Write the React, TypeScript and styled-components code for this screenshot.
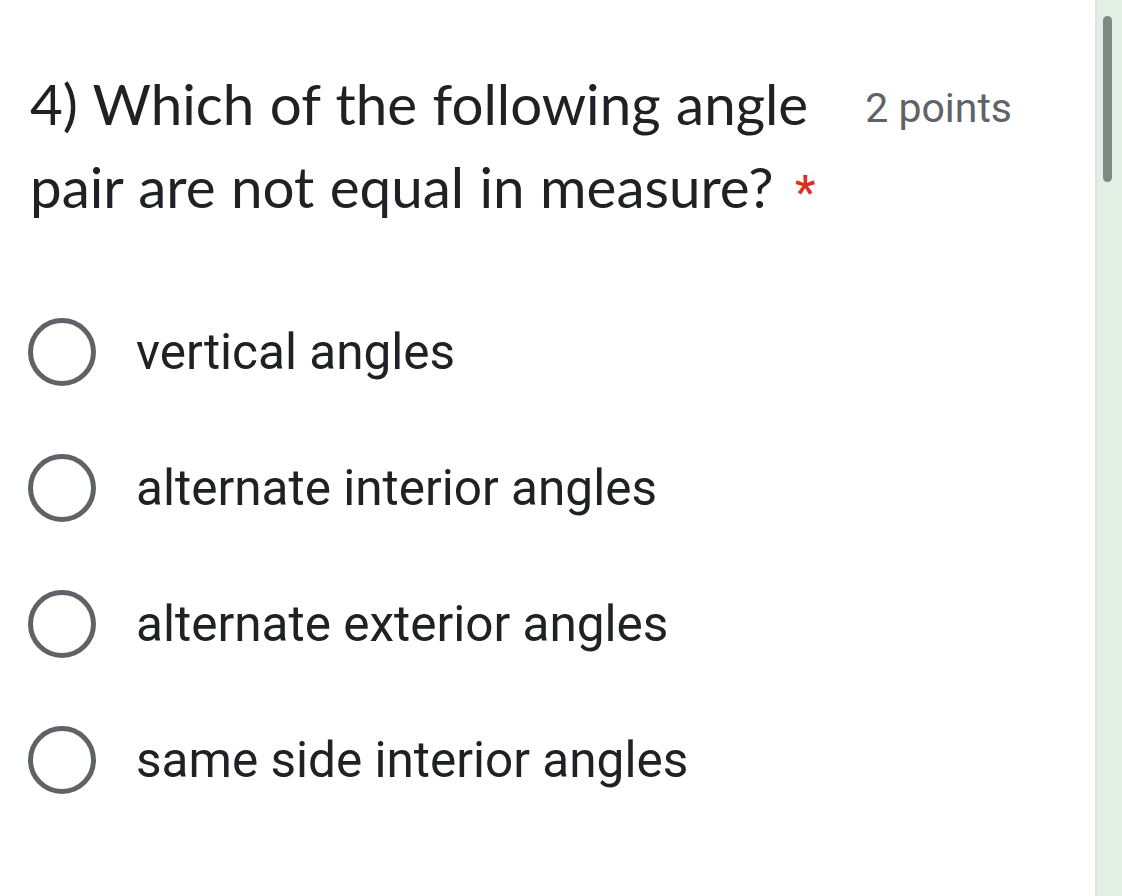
import React from 'react';
import styled, {createGlobalStyle} from 'styled-components';

const GlobalStyle = createGlobalStyle`
  html, body {
    margin: 0;
    padding: 0;
    background: #ffffff;
  }
  body {
    width: 1122px;
    height: 896px;
    overflow: hidden;
  }
`;

const Screen = styled.div`
  display: flex;
  width: 1122px;
  height: 896px;
`;

const Page = styled.div`
  flex: 1;
  background: #ffffff;
  padding: 62px 0 0 30px;
  box-sizing: border-box;
`;

const ScrollTrack = styled.div`
  position: relative;
  width: 25px;
  background: #e1efe5;
  border-left: 2px solid #dde3e0;
`;

const ScrollThumb = styled.div`
  position: absolute;
  top: 16px;
  left: 6px;
  width: 9px;
  height: 166px;
  border-radius: 5px;
  background: #7f8983;
`;

const Header = styled.div`
  display: flex;
  align-items: flex-start;
  justify-content: space-between;
  width: 982px;
`;

const Title = styled.div`
  font-family: 'Lato', 'Roboto', sans-serif;
  font-size: 56.5px;
  font-weight: 400;
  line-height: 83px;
  color: #202124;
  width: 820px;
  word-spacing: 1px;
`;

const Required = styled.span`
  font-family: 'Roboto', sans-serif;
  font-size: 46px;
  font-weight: 500;
  line-height: 1;
  color: #d93025;
  margin-left: 6px;
`;

const Points = styled.div`
  font-family: 'Roboto', sans-serif;
  font-size: 41px;
  line-height: 83px;
  color: #5f6368;
  white-space: nowrap;
  padding-top: 5px;
`;

const Options = styled.div`
  display: flex;
  flex-direction: column;
  gap: 68px;
  margin-top: 90px;
`;

const Option = styled.label`
  display: flex;
  align-items: center;
  gap: 40px;
`;

const Radio = styled.span`
  display: block;
  width: 58px;
  height: 58px;
  border: 5px solid #5f6368;
  border-radius: 50%;
  flex-shrink: 0;
  margin-left: -2px;
`;

const OptionText = styled.span`
  font-family: 'Roboto', sans-serif;
  font-size: 49.5px;
  line-height: 68px;
  color: #202124;
`;

const options = [
  'vertical angles',
  'alternate interior angles',
  'alternate exterior angles',
  'same side interior angles',
];

export default function App() {
  return (
    <>
      <GlobalStyle />
      <Screen>
        <Page>
          <Header>
            <Title>
              4) Which of the following angle pair are not equal in measure?{'\u00a0'}
              <Required>*</Required>
            </Title>
            <Points>2 points</Points>
          </Header>
          <Options>
            {options.map((o) => (
              <Option key={o}>
                <Radio />
                <OptionText>{o}</OptionText>
              </Option>
            ))}
          </Options>
        </Page>
        <ScrollTrack>
          <ScrollThumb />
        </ScrollTrack>
      </Screen>
    </>
  );
}
